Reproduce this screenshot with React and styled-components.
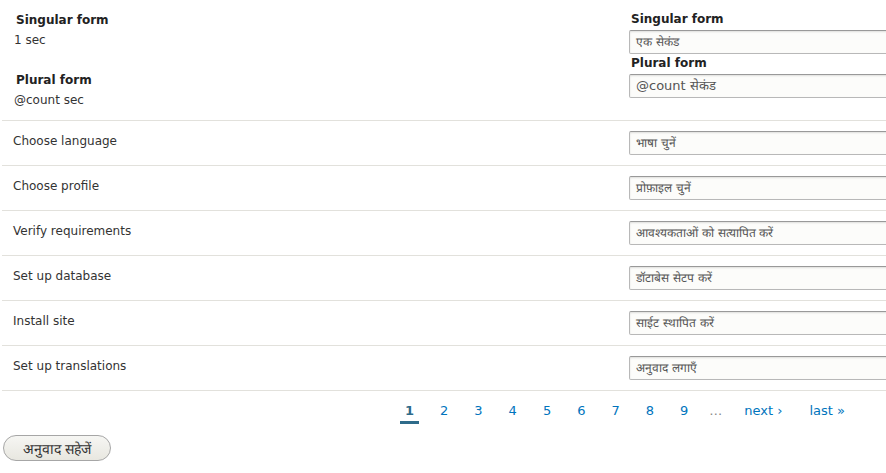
import React from "react";
import styled, { createGlobalStyle } from "styled-components";

const Global = createGlobalStyle`
  html, body { margin: 0; padding: 0; background: #fff; overflow: hidden; }
  body { font-family: "DejaVu Sans", Verdana, sans-serif; color: #333; font-size: 12px; }
`;

const Page = styled.div`
  width: 886px;
  height: 473px;
  overflow: hidden;
`;

const Table = styled.div`
  margin-left: 2px;
  width: 920px;
`;

const Row = styled.div`
  display: grid;
  grid-template-columns: 615px 1fr;
  border-bottom: 1px solid #e2e1dc;
  height: ${(p) => (p.$tall ? "121px" : "45px")};
  box-sizing: border-box;
`;

const Cell = styled.div`
  padding: 10px 12px 0 ${(p) => (p.$first ? "11px" : "12px")};
`;

const SourceLabel = styled.div`
  font-weight: bold;
  color: #222;
  font-size: 12px;
  line-height: 19px;
  padding: 1px 0 0 3px;
  margin-bottom: 1px;
`;

const SourceText = styled.div`
  font-size: 12px;
  line-height: 18px;
  padding-left: 1px;
  height: ${(p) => (p.$gap ? "39px" : "auto")};
`;

const PlainText = styled.div`
  font-size: 12px;
  line-height: 18px;
  padding-top: 1px;
`;

const FieldLabel = styled.div`
  font-weight: bold;
  color: #222;
  font-size: 12px;
  line-height: 19px;
  padding: 1px 0 0 2px;
  margin-top: -1px;
  margin-bottom: 1px;
`;

const Input = styled.div`
  box-sizing: border-box;
  height: 24px;
  width: 300px;
  border: 1px solid #b8b8b8;
  border-top-color: #999;
  border-radius: 2px;
  background: #fcfcfa;
  box-shadow: inset 0 1px 2px rgba(0, 0, 0, 0.12);
  font-size: ${(p) => (p.$big ? "13px" : "12px")};
  color: #555;
  padding: 0 6px;
  line-height: 22px;
  white-space: nowrap;
`;

const Pager = styled.nav`
  display: flex;
  align-items: flex-start;
  height: 44px;
  padding-left: 400px;
  padding-top: 11px;
  box-sizing: border-box;
`;

const PageItem = styled.span`
  display: inline-block;
  white-space: nowrap;
  font-size: 13px;
  line-height: 17px;
  color: ${(p) => (p.$current ? "#2e6b8a" : p.$muted ? "#888" : "#0074bd")};
  font-weight: ${(p) => (p.$current ? "bold" : "normal")};
  padding: 0 ${(p) => (p.$muted ? 0 : 5)}px 2px;
  margin-right: ${(p) => p.$mr ?? 16}px;
  border-bottom: 3px solid ${(p) => (p.$current ? "#2e6b8a" : "transparent")};
`;

const Button = styled.button`
  display: block;
  margin-left: 3px;
  height: 26px;
  width: 108px;
  border: 1px solid #a6a6a6;
  border-radius: 13px;
  background: linear-gradient(#f6f6f3, #e8e7e0);
  font-family: "DejaVu Sans", sans-serif;
  font-size: 14px;
  color: #333;
  padding: 0;
`;

const rows = [
  ["Choose language", "भाषा चुनें"],
  ["Choose profile", "प्रोफ़ाइल चुनें"],
  ["Verify requirements", "आवश्यकताओं को सत्यापित करें"],
  ["Set up database", "डॉटाबेस सेटप करें"],
  ["Install site", "साईट स्थापित करें"],
  ["Set up translations", "अनुवाद लगाएँ"],
];

export default function App() {
  return (
    <Page>
      <Global />
      <Table>
        <Row $tall>
          <Cell $first>
            <SourceLabel>Singular form</SourceLabel>
            <SourceText $gap>1 sec</SourceText>
            <SourceLabel>Plural form</SourceLabel>
            <SourceText>@count sec</SourceText>
          </Cell>
          <Cell>
            <FieldLabel>Singular form</FieldLabel>
            <Input>एक सेकंड</Input>
            <FieldLabel>Plural form</FieldLabel>
            <Input $big>@count सेकंड</Input>
          </Cell>
        </Row>
        {rows.map(([src, tr]) => (
          <Row key={src}>
            <Cell $first>
              <PlainText>{src}</PlainText>
            </Cell>
            <Cell>
              <Input>{tr}</Input>
            </Cell>
          </Row>
        ))}
      </Table>
      <Pager>
        <PageItem $current>1</PageItem>
        {["2", "3", "4", "5", "6", "7", "8", "9"].map((n) => (
          <PageItem key={n}>{n}</PageItem>
        ))}
        <PageItem $muted $mr={17}>…</PageItem>
        <PageItem $mr={17}>next ›</PageItem>
        <PageItem>last »</PageItem>
      </Pager>
      <Button>अनुवाद सहेजें</Button>
    </Page>
  );
}
